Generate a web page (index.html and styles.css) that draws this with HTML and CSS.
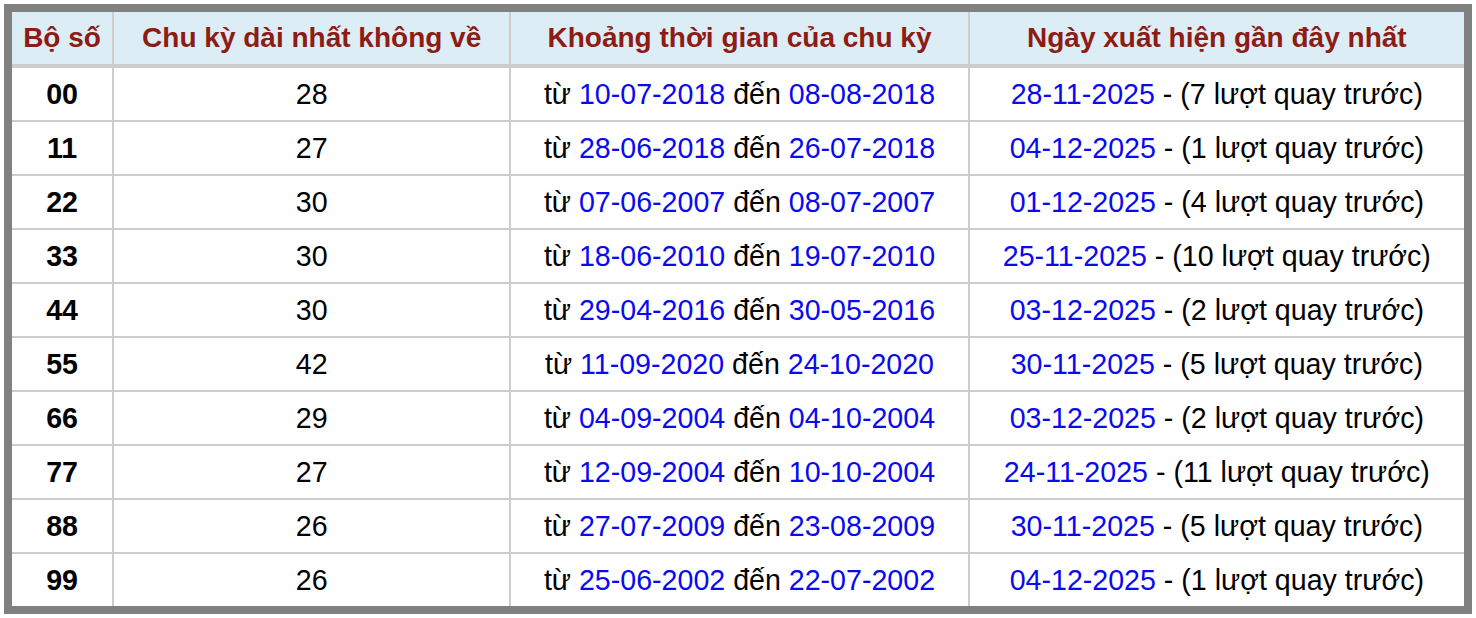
FILE: index.html
```html
<!DOCTYPE html>
<html lang="vi">
<head>
<meta charset="utf-8">
<title>Chu kỳ dài nhất</title>
<link rel="stylesheet" href="styles.css">
</head>
<body>
<table class="stats">
  <colgroup>
    <col class="c1"><col class="c2"><col class="c3"><col class="c4">
  </colgroup>
  <thead>
    <tr><th>Bộ số</th><th>Chu kỳ dài nhất không về</th><th>Khoảng thời gian của chu kỳ</th><th>Ngày xuất hiện gần đây nhất</th></tr>
  </thead>
  <tbody>
    <tr><td class="num">00</td><td>28</td><td>từ <span class="d">10-07-2018</span> đến <span class="d">08-08-2018</span></td><td><span class="d">28-11-2025</span> - (7 lượt quay trước)</td></tr>
    <tr><td class="num">11</td><td>27</td><td>từ <span class="d">28-06-2018</span> đến <span class="d">26-07-2018</span></td><td><span class="d">04-12-2025</span> - (1 lượt quay trước)</td></tr>
    <tr><td class="num">22</td><td>30</td><td>từ <span class="d">07-06-2007</span> đến <span class="d">08-07-2007</span></td><td><span class="d">01-12-2025</span> - (4 lượt quay trước)</td></tr>
    <tr><td class="num">33</td><td>30</td><td>từ <span class="d">18-06-2010</span> đến <span class="d">19-07-2010</span></td><td><span class="d">25-11-2025</span> - (10 lượt quay trước)</td></tr>
    <tr><td class="num">44</td><td>30</td><td>từ <span class="d">29-04-2016</span> đến <span class="d">30-05-2016</span></td><td><span class="d">03-12-2025</span> - (2 lượt quay trước)</td></tr>
    <tr><td class="num">55</td><td>42</td><td>từ <span class="d">11-09-2020</span> đến <span class="d">24-10-2020</span></td><td><span class="d">30-11-2025</span> - (5 lượt quay trước)</td></tr>
    <tr><td class="num">66</td><td>29</td><td>từ <span class="d">04-09-2004</span> đến <span class="d">04-10-2004</span></td><td><span class="d">03-12-2025</span> - (2 lượt quay trước)</td></tr>
    <tr><td class="num">77</td><td>27</td><td>từ <span class="d">12-09-2004</span> đến <span class="d">10-10-2004</span></td><td><span class="d">24-11-2025</span> - (11 lượt quay trước)</td></tr>
    <tr><td class="num">88</td><td>26</td><td>từ <span class="d">27-07-2009</span> đến <span class="d">23-08-2009</span></td><td><span class="d">30-11-2025</span> - (5 lượt quay trước)</td></tr>
    <tr><td class="num">99</td><td>26</td><td>từ <span class="d">25-06-2002</span> đến <span class="d">22-07-2002</span></td><td><span class="d">04-12-2025</span> - (1 lượt quay trước)</td></tr>
  </tbody>
</table>
</body>
</html>
```
FILE: styles.css
```css
html, body {
  margin: 0;
  padding: 0;
  background: #ffffff;
}
body {
  padding: 4px;
  font-family: "Liberation Sans", Arial, sans-serif;
}
.stats {
  width: 1468px;
  table-layout: fixed;
  border-collapse: separate;
  border-spacing: 0;
  border: 8px solid #808080;
  font-size: 28px;
  color: #000;
}
.c1 { width: 102px; }
.c2 { width: 397px; }
.c3 { width: 458px; }
.c4 { width: 494px; }
.stats th,
.stats td {
  padding: 0;
  text-align: center;
  vertical-align: middle;
  border-right: 2px solid #cccccc;
  border-bottom: 2px solid #cccccc;
  white-space: nowrap;
  line-height: 1;
}
.stats th:last-child,
.stats td:last-child {
  border-right: 0;
}
.stats tbody tr:last-child td {
  border-bottom: 0;
}
.stats th {
  height: 52px;
  background: #dcedf6;
  color: #8e1b14;
  font-weight: bold;
  border-bottom: 4px solid #cccccc;
}
.stats td {
  height: 52px;
  font-size: 28.6px;
}
.stats .num {
  font-weight: bold;
}
.d {
  color: #0a0af0;
}
```
